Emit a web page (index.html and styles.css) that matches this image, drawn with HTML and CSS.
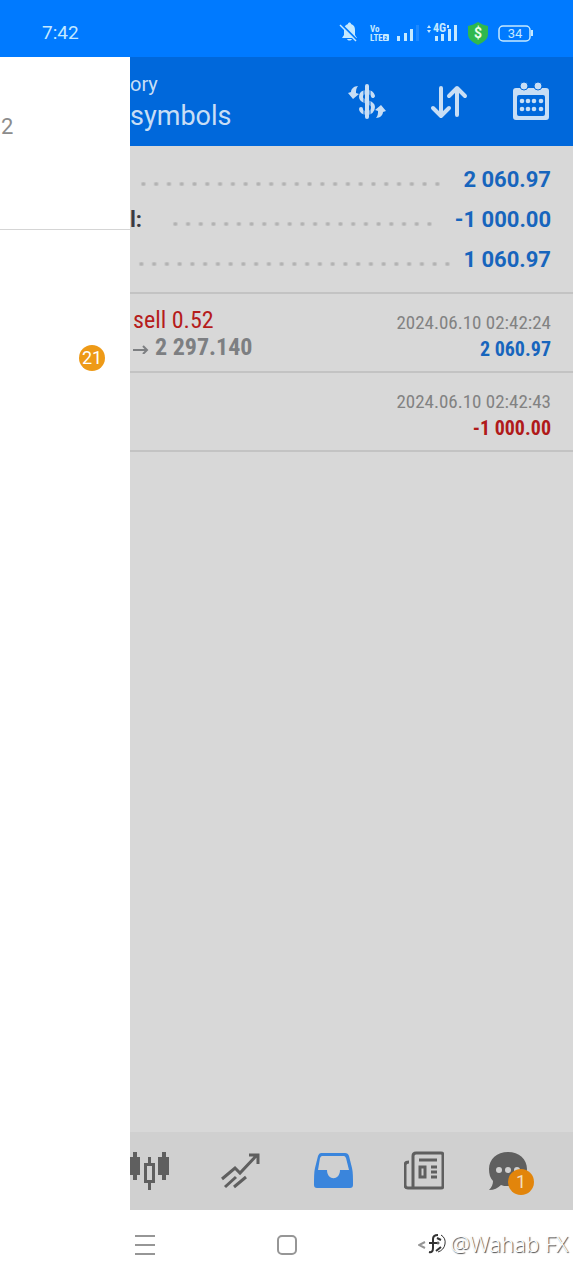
FILE: index.html
```
<!DOCTYPE html>
<html lang="en">

<head>
  <meta charset="UTF-8">
  <meta name="viewport" content="width=device-width, initial-scale=1">
  <title>History</title>
  <link rel="stylesheet" href="styles.css">
</head>

<body>
  <div class="status-bar">
    <span class="clock">7:42</span>
    <svg class="status-icons" width="196" height="26" viewBox="0 0 196 26" aria-hidden="true">
      <!-- muted bell -->
      <path class="light" d="M3 18l2-3V9c0-3 2-4 4-5 0-2 3-2 3 0 3 1 4 3 4 6v5l2 3zM8 19h5c-1 2-4 2-5 0z" />
      <path class="cut" d="M2 4l17 17" />
      <path class="line" d="M1 5l16 16" />
      <!-- volte -->
      <text class="tiny" x="31" y="12">Vo</text>
      <text class="tiny" x="31" y="21">LTE</text>
      <rect class="light" x="44" y="14" width="6" height="7" rx="1" />
      <text class="sim" x="45" y="20">2</text>
      <!-- signal 1 -->
      <path class="light" d="M58 16h3v5h-3zM65 13h3v8h-3zM71 9h3v12h-3z" />
      <path class="faint" d="M77 5h3v16h-3z" />
      <!-- signal 2 -->
      <path class="light" d="M88 8l2-3 2 3zM88 10l2 3 2-3zM96 16h3v5h-3zM102 14h3v7h-3zM109 9h3v12h-3zM115 5h3v16h-3z" />
      <text class="net" x="94" y="12">4G</text>
      <path class="light" d="M108 5h2v3h-2z" />
      <!-- shield -->
      <path class="shield" d="M139 2c3 2 6 3 10 4v8c0 5-4 8-10 11-6-3-10-6-10-11V6c4-1 7-2 10-4z" />
      <text class="coin" x="139" y="18" text-anchor="middle">$</text>
      <!-- battery -->
      <rect class="battery" x="160" y="6" width="31" height="15" rx="4" />
      <path class="light" d="M192 10h2v6h-2z" />
      <text class="percent" x="176" y="18" text-anchor="middle">34</text>
    </svg>
  </div>

  <div class="screen">
    <aside class="drawer">
      <div class="account">2</div>
      <div class="drawer-item"><span class="badge">21</span></div>
    </aside>

    <main class="app">
      <header class="toolbar">
        <div class="titles">
          <div class="title">ory</div>
          <div class="subtitle">symbols</div>
        </div>
        <button class="tool" aria-label="Currency">
          <svg width="40" height="40" viewBox="0 0 40 40">
            <path class="stroke" d="M26 14c-1-3-3-4-6-4-4 0-6 2-6 5 0 6 12 4 12 10 0 4-3 6-6 6-4 0-6-2-6-4" />
            <path class="gap" d="M17 4v31M23 4v31" />
            <path class="bar" d="M20 4v31" />
            <path class="fill" d="M1 11l3-1c0-3 3-6 7-6-2 2-2 5-2 7l3 1-6 5zM28 28l6-5 5 6-3 1c0 3-3 6-7 6 2-2 2-5 2-7z" />
          </svg>
        </button>
        <button class="tool" aria-label="Sort">
          <svg width="40" height="40" viewBox="0 0 40 40">
            <path class="stroke" d="M12 6v27M4 26l8 8 8-8M28 33V7M20 14l8-8 8 8" />
          </svg>
        </button>
        <button class="tool" aria-label="Period">
          <svg width="40" height="40" viewBox="0 0 40 40">
            <path class="fill" fill-rule="evenodd" d="M5 6h30q3 0 3 3v26q0 3-3 3H5q-3 0-3-3V9q0-3 3-3zM8 13q-2 0-2 2v17q0 2 2 2h24q2 0 2-2V15q0-2-2-2z" />
            <circle class="pin" cx="13" cy="4" r="4" />
            <circle class="pin" cx="27" cy="4" r="4" />
            <g class="fill">
              <circle cx="11" cy="19" r="2.300" /><circle cx="17" cy="19" r="2.300" /><circle cx="23" cy="19" r="2.300" /><circle cx="30" cy="19" r="2.300" />
              <circle cx="11" cy="27" r="2.300" /><circle cx="17" cy="27" r="2.300" /><circle cx="23" cy="27" r="2.300" /><circle cx="30" cy="27" r="2.300" />
            </g>
          </svg>
        </button>
      </header>

      <dl class="summary">
        <div class="sum-row">
          <dt></dt>
          <dd>2 060.97</dd>
        </div>
        <div class="sum-row named">
          <dt>l:</dt>
          <dd>-1 000.00</dd>
        </div>
        <div class="sum-row total">
          <dt></dt>
          <dd>1 060.97</dd>
        </div>
      </dl>

      <ul class="deals">
        <li class="deal">
          <div class="deal-info">
            <div class="side">sell 0.52</div>
            <div class="price">
              <svg width="16" height="12" viewBox="0 0 16 12"><path d="M0 8h14M10 4l4 4-4 4" /></svg>
              <span>2 297.140</span>
            </div>
          </div>
          <div class="deal-result">
            <div class="date">2024.06.10 02:42:24</div>
            <div class="profit">2 060.97</div>
          </div>
        </li>
        <li class="deal">
          <div class="deal-info"></div>
          <div class="deal-result">
            <div class="date">2024.06.10 02:42:43</div>
            <div class="profit loss">-1 000.00</div>
          </div>
        </li>
      </ul>

      <nav class="tabs">
        <button class="tab" aria-label="Charts">
          <svg width="40" height="40" viewBox="0 0 40 40">
            <path class="fill" d="M0 6h3V1h4v5h3v18H7v5H3v-5H0zM28 6h4V1h4v5h3v18h-3v5h-4v-5h-4zM18 6h3v6h-3zM18 32h3v7h-3z" />
            <path class="thick" d="M15.500 13.500h8v17h-8z" />
          </svg>
        </button>
        <button class="tab" aria-label="Trade">
          <svg width="40" height="40" viewBox="0 0 40 40">
            <path class="thick" d="M1 28l13-11 5 5L36 4M28 4h9v9M4 36l11-10M13 36l12-10" />
          </svg>
        </button>
        <button class="tab active" aria-label="History">
          <svg width="40" height="40" viewBox="0 0 40 40">
            <path class="fill" fill-rule="evenodd" d="M8 2h24q3 0 4 3l3 12c1 4 1 10 1 17q0 3-3 3H4q-3 0-3-3c0-7 0-13 1-17L5 5q1-3 3-3zM9 5q-1 0-2 2L5 19h9c0 11 13 11 13 0h9L33 7q-1-2-2-2z" />
          </svg>
        </button>
        <button class="tab" aria-label="News">
          <svg width="40" height="40" viewBox="0 0 40 40">
            <path class="thick" d="M12 2h25q2 0 2 2v31q0 2-2 2H4q-3 0-3-3V14q0-3 4-3M9 37V5q0-3 3-3M15 9h18M27 16h6M27 21h6M27 26h6M16 16h5v10h-5z" />
          </svg>
        </button>
        <button class="tab messages" aria-label="Messages">
          <svg width="40" height="40" viewBox="0 0 40 40">
            <path class="fill" d="M20 1c11 0 19 7 19 17s-8 17-19 17c-3 0-5 0-7-1-3 3-7 5-12 5 3-3 4-6 4-9-3-3-4-7-4-12C1 8 9 1 20 1z" />
            <g class="dots"><circle cx="11" cy="19" r="3" /><circle cx="20" cy="19" r="3" /><circle cx="29" cy="19" r="3" /></g>
          </svg>
          <span class="badge tab-badge">1</span>
        </button>
      </nav>
    </main>
  </div>

  <footer class="system-nav">
    <button aria-label="Recent apps"><svg width="20" height="20" viewBox="0 0 20 20"><path d="M0 1h20M0 10h20M0 19h20" /></svg></button>
    <button aria-label="Home"><svg width="20" height="20" viewBox="0 0 20 20"><rect x="1" y="1" width="18" height="18" rx="4" /></svg></button>
    <button aria-label="Back"><svg width="20" height="20" viewBox="0 0 20 20"><path d="M7 7l-6 3 6 3" /></svg></button>
    <div class="watermark">
      <svg width="20" height="24" viewBox="0 0 20 24">
        <path class="dark" d="M1 21q4 1 4-4V8q0-4 5-4M1 12h8M8 20l5-4M9 7l4 2" />
        <path class="thin" d="M13 4q5 3 4 9t-7 8" />
        <circle cx="10" cy="12" r="1" />
      </svg>
      <span>@Wahab FX</span>
    </div>
  </footer>
</body>

</html>
```
FILE: styles.css
```
* {
  box-sizing: border-box;
}

body {
  margin: 0;
  min-height: 100vh;
  display: flex;
  flex-direction: column;
  font-family: Roboto, "Liberation Sans", sans-serif;
  background: #fff;
}

button {
  padding: 0;
  border: 0;
  background: none;
  color: inherit;
  font: inherit;
}

svg {
  display: block;
  fill: none;
}

/* status bar */
.status-bar {
  display: flex;
  align-items: center;
  justify-content: space-between;
  height: 57px;
  padding: 8px 38px 0 42px;
  background: #007aff;
}

.clock {
  color: #c5e9ff;
  font-size: 19px;
}

.status-icons text {
  fill: #c5e9ff;
  font-family: "Roboto Condensed", Roboto, sans-serif;
  font-weight: 700;
}

.status-icons .tiny {
  font-size: 9px;
}

.status-icons .sim {
  fill: #007aff;
  font-size: 6px;
}

.status-icons .net {
  font-size: 12px;
}

.status-icons .coin {
  fill: #e9ffe9;
  font-family: Roboto, sans-serif;
  font-size: 14px;
}

.status-icons .percent {
  font-family: Roboto, sans-serif;
  font-size: 13px;
  font-weight: 400;
}

.light {
  fill: #c5e9ff;
}

.faint {
  fill: #1d89ff;
}

.shield {
  fill: #2fb84d;
}

.cut {
  stroke: #007aff;
  stroke-width: 2;
}

.line,
.battery {
  stroke: #c5e9ff;
  stroke-width: 1.5;
}

/* drawer + page */
.screen {
  flex: 1;
  display: flex;
}

.drawer {
  flex: none;
  width: 130px;
  background: #fff;
}

.account {
  height: 173px;
  padding: 56px 0 0 1px;
  border-bottom: 1px solid #d5d5d5;
  color: #8c8c8c;
  font-size: 22px;
  line-height: 28px;
}

.drawer-item {
  display: flex;
  justify-content: flex-end;
  padding: 115px 25px 0 0;
}

.badge {
  width: 26px;
  height: 26px;
  border-radius: 50%;
  background: #ee9a17;
  color: #fff;
  font-size: 18px;
  line-height: 26px;
  text-align: center;
}

.app {
  flex: 1;
  min-width: 0;
  display: flex;
  flex-direction: column;
  background: #d8d8d8;
}

.toolbar {
  display: flex;
  align-items: center;
  gap: 42px;
  height: 89px;
  padding-right: 22px;
  background: #0068db;
  color: #c8def5;
}

.titles {
  flex: 1;
}

.title {
  font-size: 20px;
  line-height: 28px;
}

.subtitle {
  font-size: 27px;
  line-height: 36px;
}

.fill {
  fill: currentColor;
}

.stroke,
.bar {
  stroke: currentColor;
  stroke-width: 4;
  stroke-linecap: round;
  stroke-linejoin: round;
}

.gap {
  stroke: #0068db;
  stroke-width: 1;
}

.pin {
  fill: currentColor;
  stroke: #0068db;
}

/* totals */
.summary {
  margin: 0;
  padding: 13px 22px 13px 0;
  border-bottom: 2px solid #c3c3c3;
  font-size: 22px;
  font-weight: 700;
}

.sum-row {
  display: flex;
  align-items: center;
  height: 40px;
}

.sum-row dt {
  color: #3a3a42;
}

.sum-row dd {
  order: 2;
  margin: 0;
  color: #1765bd;
}

.sum-row::before {
  content: "";
  order: 1;
  flex: 1;
  height: 4px;
  margin: 9px 19px 0 7px;
  background: radial-gradient(circle, #b2b2b2 1px, transparent 3px) 0 0 / 13px 4px round;
}

.named::before {
  margin-left: 27px;
}

.total::before {
  margin-left: 5px;
  margin-right: 9px;
}

/* deals */
.deals {
  flex: 1;
  margin: 0;
  padding: 0;
  list-style: none;
  font-family: "Roboto Condensed", "Liberation Sans Narrow", Roboto, sans-serif;
}

.deal {
  display: flex;
  justify-content: space-between;
  padding: 13px 22px 8px 3px;
  border-bottom: 2px solid #c3c3c3;
  line-height: 27px;
}

.side {
  color: #b51c1c;
  font-size: 24px;
}

.price {
  display: flex;
  align-items: center;
  gap: 6px;
  color: #7d7f82;
  font-size: 24px;
  font-weight: 700;
}

.price svg {
  stroke: currentColor;
  stroke-width: 2;
}

.deal-result {
  padding-top: 2px;
  text-align: right;
}

.date {
  color: #828282;
  font-size: 19px;
}

.profit {
  color: #1765bd;
  font-size: 20px;
  font-weight: 700;
}

.loss {
  color: #b01a1a;
}

/* bottom tabs */
.tabs {
  display: flex;
  align-items: center;
  justify-content: space-between;
  height: 78px;
  padding-right: 45px;
  background: #d0d0d0;
  color: #5f5f5f;
}

.tab {
  position: relative;
}

.messages {
  margin-left: -7px;
}

.active {
  color: #3a85dc;
}

.thick {
  stroke: currentColor;
  stroke-width: 3;
}

.dots {
  fill: #d0d0d0;
}

.tab-badge {
  position: absolute;
  right: -6px;
  bottom: -4px;
  background: #e2850b;
  color: #f3dfc0;
}

/* system navigation */
.system-nav {
  position: relative;
  display: grid;
  grid-template-columns: repeat(3, 1fr);
  place-items: center;
  height: 70px;
  padding: 0 13%;
}

.system-nav button svg {
  stroke: #969696;
  stroke-width: 2;
}

.watermark {
  position: absolute;
  right: 5px;
  bottom: 22px;
  display: flex;
  align-items: center;
  gap: 2px;
  color: #fff;
  font-family: "Noto Sans", "Open Sans", sans-serif;
  font-size: 22px;
  font-weight: 300;
  line-height: 30px;
  text-shadow: 1px 1px 1px #444;
}

.watermark svg {
  stroke: #333;
}

.watermark .dark {
  stroke-width: 2;
}
```
